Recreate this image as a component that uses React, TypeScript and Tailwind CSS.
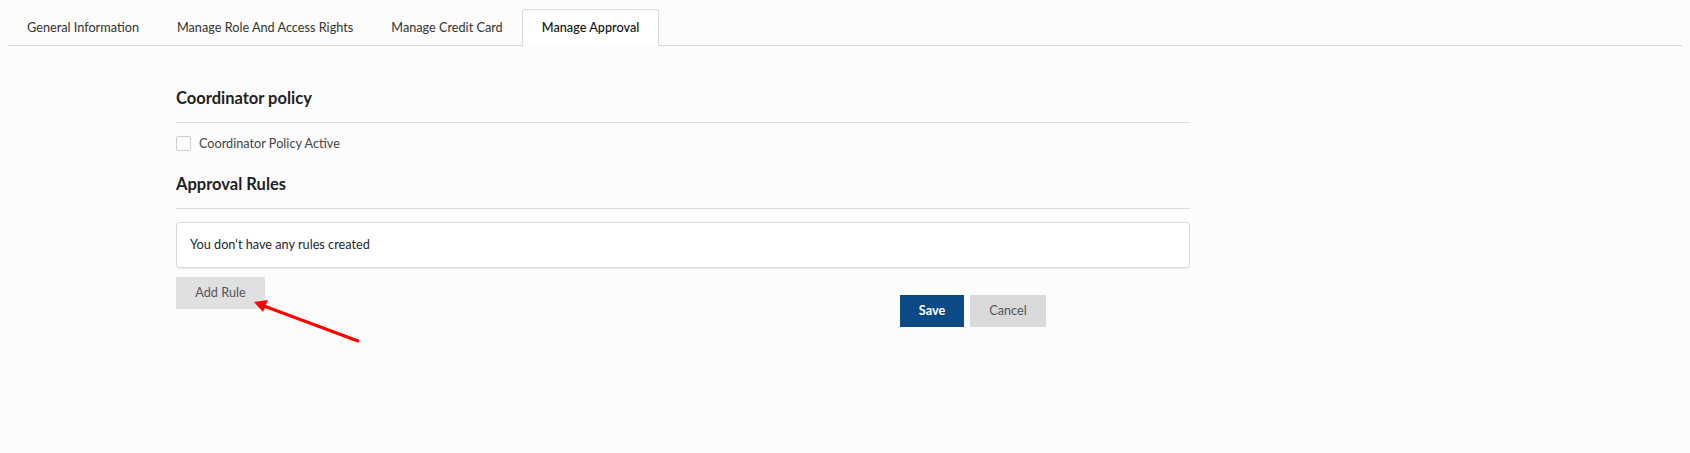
import { useState } from "react";

const tabs = [
  "General Information",
  "Manage Role And Access Rights",
  "Manage Credit Card",
  "Manage Approval",
];

function SectionHeading({ title }: { title: string }) {
  return (
    <div className="border-b border-[#dcdcdc] pb-[14px]">
      <h2 className="h-[20px] text-[16.5px] leading-[20px] font-bold text-[#222]">
        {title}
      </h2>
    </div>
  );
}

export default function App() {
  const [active, setActive] = useState(3);
  const [policyActive, setPolicyActive] = useState(false);

  return (
    <div
      className="relative min-h-[453px] w-full bg-[#fcfcfc] text-[12.7px]"
      style={{ fontFamily: "Lato, 'Liberation Sans', sans-serif" }}
    >
      {/* tabs */}
      <div className="ml-[8px] mr-[8px] flex border-b border-[#d8d8d8] pt-[9px]">
        {tabs.map((tab, i) => (
          <button
            key={tab}
            onClick={() => setActive(i)}
            className={
              i === active
                ? "-mb-px h-[37px] rounded-t-[3px] border border-b-0 border-[#d8d8d8] bg-white px-[19px] font-medium text-[#111]"
                : "-mb-px h-[37px] border border-transparent px-[18px] text-[#333]"
            }
          >
            {tab}
          </button>
        ))}
      </div>

      {/* content */}
      <div className="ml-[176px] w-[1014px]">
        <div className="mt-[42px]">
          <SectionHeading title="Coordinator policy" />
        </div>

        <label className="mt-[13px] flex h-[15px] items-center gap-[8px] text-[#444]">
          <input
            type="checkbox"
            checked={policyActive}
            onChange={() => setPolicyActive(!policyActive)}
            className="h-[15px] w-[15px] appearance-none rounded-[2px] border border-[#cfcfcf] bg-white"
          />
          <span>Coordinator Policy Active</span>
        </label>

        <div className="mt-[23px]">
          <SectionHeading title="Approval Rules" />
        </div>

        <div className="mt-[13px] flex h-[46px] items-center rounded-[3px] border border-[#dadada] bg-white px-[13px] text-[#1f2533] shadow-[0_1px_1px_rgba(0,0,0,0.06)]">
          You don't have any rules created
        </div>

        <div className="flex items-start">
          <button className="mt-[9px] h-[32px] w-[89px] bg-[#dfe0e2] text-[#555]">
            Add Rule
          </button>
          <div className="ml-[635px] mt-[27px] flex gap-[6px]">
            <button className="h-[32px] w-[64px] bg-[#0b4a85] font-bold text-white">
              Save
            </button>
            <button className="h-[32px] w-[76px] bg-[#d9d9d9] text-[#555]">
              Cancel
            </button>
          </div>
        </div>
      </div>

      {/* annotation arrow */}
      <svg
        className="pointer-events-none absolute left-0 top-0"
        width="1690"
        height="453"
      >
        <line
          x1="358"
          y1="341"
          x2="264"
          y2="306"
          stroke="#ff0000"
          strokeWidth="3"
          strokeLinecap="round"
        />
        <polygon points="254,302 268,300 263,312" fill="#ff0000" />
      </svg>
    </div>
  );
}
